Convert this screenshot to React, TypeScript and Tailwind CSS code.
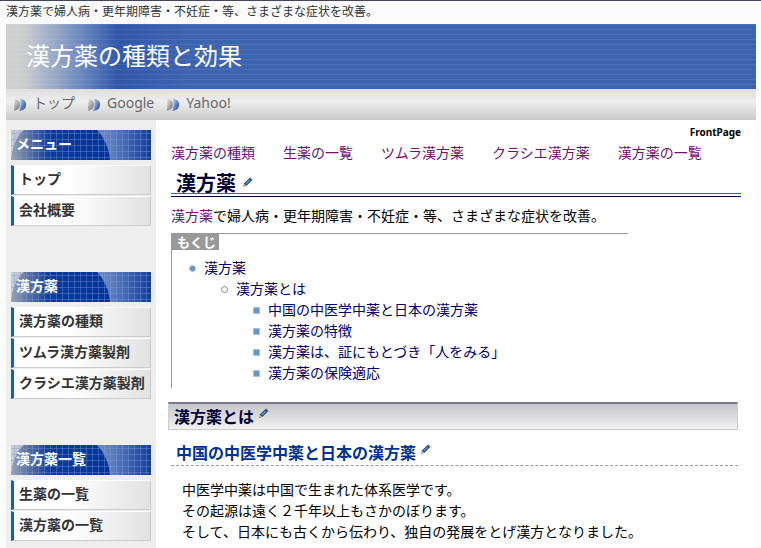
import type { ReactNode } from "react";

type MenuBlock = {
  title: string;
  items: string[];
};

const navLinks = ["トップ", "Google", "Yahoo!"];

const menuBlocks: MenuBlock[] = [
  { title: "メニュー", items: ["トップ", "会社概要"] },
  {
    title: "漢方薬",
    items: ["漢方薬の種類", "ツムラ漢方薬製剤", "クラシエ漢方薬製剤"],
  },
  { title: "漢方薬一覧", items: ["生薬の一覧", "漢方薬の一覧"] },
];

const topLinks = [
  "漢方薬の種類",
  "生薬の一覧",
  "ツムラ漢方薬",
  "クラシエ漢方薬",
  "漢方薬の一覧",
];

const tocSections = [
  "中国の中医学中薬と日本の漢方薬",
  "漢方薬の特徴",
  "漢方薬は、証にもとづき「人をみる」",
  "漢方薬の保険適応",
];

const NavIcon = () => (
  <svg width="13" height="14" viewBox="0 0 13 14" aria-hidden="true">
    <defs>
      <linearGradient id="leafGray" x1="0" y1="0" x2="0.6" y2="1">
        <stop offset="0" stopColor="#ececec" />
        <stop offset="1" stopColor="#7c7c7c" />
      </linearGradient>
      <linearGradient id="leafBlue" x1="0" y1="0" x2="1" y2="0.8">
        <stop offset="0" stopColor="#dfe6f4" />
        <stop offset="0.55" stopColor="#6c8cc8" />
        <stop offset="1" stopColor="#1c4694" />
      </linearGradient>
    </defs>
    <path d="M0.5 0.5C4 1 6 3 6 6.5C6 10 4 12 0 13Z" fill="url(#leafGray)" />
    <path d="M5.5 0.5C10 1 12 3 12 6.5C12 10 10 12.500 5 13C7 9 7 5 5.500 0.500Z" fill="url(#leafBlue)" />
  </svg>
);

const EditLink = () => (
  <a href="#edit" aria-label="編集">
    <svg width="10" height="10" viewBox="0 0 10 10" aria-hidden="true">
      <path d="M0.3 9.7L1 6.6L6.6 1L9 3.300L3.500 8.800Z" fill="#20385c" />
      <path d="M2 6.8L6.2 2.6L7.3 3.7L3.200 7.700Z" fill="#4a98e0" />
      <path d="M0.5 9.4L1.1 7L3.100 8.800Z" fill="#ecc088" />
      <path d="M6.600 1L7.500 0.200L9.800 2.400L9 3.300Z" fill="#7d8796" />
    </svg>
  </a>
);

const BlockTitle = ({ children }: { children: ReactNode }) => (
  <div className="relative h-[30px] overflow-hidden bg-linear-to-r from-[#c8ccd2] via-[#6481bf] via-70% to-[#0e3c9a]">
    <svg className="absolute inset-0" width="100%" height="30" aria-hidden="true">
      <defs>
        <linearGradient id="dome" x1="0" x2="1">
          <stop offset="0" stopColor="#9da3ad" />
          <stop offset="0.15" stopColor="#64799f" />
          <stop offset="0.4" stopColor="#0c3a9a" />
          <stop offset="1" stopColor="#03339a" />
        </linearGradient>
        <pattern id="grid" width="6" height="6" patternUnits="userSpaceOnUse">
          <path d="M0 3.500H6M3.500 0V6" stroke="#7d9ad6" strokeOpacity="0.38" />
        </pattern>
      </defs>
      <path d="M0 30C1 18 5 6 13 0H86C93 7 98 18 99 30Z" fill="url(#dome)" />
      <rect width="100%" height="30" fill="url(#grid)" />
    </svg>
    <h2 className="relative pl-[5px] text-sm leading-[28px] font-bold text-white">
      {children}
    </h2>
  </div>
);

const Sidebar = () => (
  <aside className="flex w-[150px] shrink-0 flex-col gap-[46px] bg-[#eee] px-[5px] pt-[10px]">
    {menuBlocks.map((block) => (
      <section key={block.title}>
        <BlockTitle>{block.title}</BlockTitle>
        <ul className="mt-[5px] flex flex-col gap-px">
          {block.items.map((item) => (
            <li key={item}>
              <a
                href="#"
                className="block h-[30px] border-t border-r border-b border-l-3 border-t-white border-r-[#ccc] border-b-[#ccc] border-l-[#0a64b4] bg-linear-to-r from-white from-40% to-[#e2e2e2] pl-[5px] text-sm leading-[25px] font-bold whitespace-nowrap text-[#333]"
              >
                {item}
              </a>
            </li>
          ))}
        </ul>
      </section>
    ))}
  </aside>
);

const Toc = () => (
  <nav className="mt-[7px] mr-[113px] h-[155px] border-t border-l border-[#999] text-sm leading-[21px] text-[#000066]">
    <div className="w-[47px] bg-[#999] pl-[5px] text-[13px] leading-4 font-bold text-white">
      もくじ
    </div>
    <ul className="mt-[7px] pl-8">
      <li>
        <div className="relative">
          <span className="absolute top-2 -left-[15px] size-[7px] rounded-full border border-[#a9c3dd] bg-[#6496c8]" />
          <a href="#kampo">漢方薬</a>
        </div>
        <ul className="pl-8">
          <li>
            <div className="relative">
              <span className="absolute top-2 -left-[15px] size-[7px] rounded-full border border-[#888]" />
              <a href="#about">漢方薬とは</a>
            </div>
            <ul className="pl-8">
              {tocSections.map((section) => (
                <li key={section} className="relative">
                  <span className="absolute top-2 -left-[15px] size-[7px] border border-[#a9c3dd] bg-[#6496c8]" />
                  <a href="#section">{section}</a>
                </li>
              ))}
            </ul>
          </li>
        </ul>
      </li>
    </ul>
  </nav>
);

const App = () => {
  return (
    <div className="flex min-h-screen flex-col border-t border-[#44465c] bg-[#fbfbfb] pr-[5px] pl-[6px] font-['Noto_Sans','Noto_Sans_CJK_JP',sans-serif] text-black">
      <p className="h-[23px] text-xs leading-[22px] text-[#333]">
        漢方薬で婦人病・更年期障害・不妊症・等、さまざまな症状を改善。
      </p>

      <header>
        <div className="h-[65px] bg-[repeating-linear-gradient(to_bottom,#ffffff12_0px,#ffffff12_1px,transparent_1px,transparent_5px),linear-gradient(to_right,#cfcfcf_0px,#cfcfcf_16px,#9aaac8_48px,#6482bc_80px,#3157a8_112px,#3e64b0_180px)]">
          <h1 className="pl-5 text-2xl leading-[63px] text-white">
            漢方薬の種類と効果
          </h1>
        </div>
        <nav className="flex h-[31px] gap-[13px] bg-linear-to-b from-[#dedede] via-[#eee] via-40% to-[#cacaca] pl-2 text-sm leading-[28px] text-[#666]">
          {navLinks.map((link) => (
            <a key={link} href="#" className="flex gap-[6px]">
              <span className="pt-[9px]">
                <NavIcon />
              </span>
              {link}
            </a>
          ))}
        </nav>
      </header>

      <div className="flex grow">
        <Sidebar />

        <main className="min-w-0 grow bg-white px-[15px]">
          <div className="pt-1 text-right text-[10px] leading-4 font-bold">
            FrontPage
          </div>
          <nav className="mt-0.5 flex gap-7 text-sm leading-[21px] whitespace-nowrap text-[#701070]">
            {topLinks.map((link) => (
              <a key={link} href="#">
                {link}
              </a>
            ))}
          </nav>

          <div className="mt-[10px] border-b border-[#000033]">
            <div className="mb-0.5 flex h-[21px] gap-[7px] border-b border-[#1e6cb0] pl-[5px]">
              <h2 className="text-xl leading-[22px] font-bold text-[#000033]">
                漢方薬
              </h2>
              <span className="pt-1">
                <EditLink />
              </span>
            </div>
          </div>

          <p className="mt-2 text-sm leading-[21px]">
            <a href="#" className="text-[#701070]">
              漢方薬
            </a>
            で婦人病・更年期障害・不妊症・等、さまざまな症状を改善。
          </p>

          <Toc />

          <div className="mt-[14px] mr-[3px] -ml-[3px] flex h-7 gap-[5px] border border-t-2 border-[#ccc] border-t-[#77778f] bg-linear-to-b from-[#c6c6cb] to-[#f2f2f2] pl-[5px]">
            <h3 className="text-base leading-[26px] font-bold text-[#000033]">
              漢方薬とは
            </h3>
            <span className="pt-1">
              <EditLink />
            </span>
          </div>

          <div className="mt-[10px] mr-[3px] flex h-[26px] gap-[5px] border-b border-dashed border-[#999] pl-[5px]">
            <h4 className="text-base leading-[26px] font-bold text-[#003090]">
              中国の中医学中薬と日本の漢方薬
            </h4>
            <span className="pt-1">
              <EditLink />
            </span>
          </div>

          <p className="mt-[13px] ml-[11px] text-sm leading-[21px]">
            中医学中薬は中国で生まれた体系医学です。
            <br />
            その起源は遠く２千年以上もさかのぼります。
            <br />
            そして、日本にも古くから伝わり、独自の発展をとげ漢方となりました。
          </p>
        </main>
      </div>
    </div>
  );
};

export default App;
